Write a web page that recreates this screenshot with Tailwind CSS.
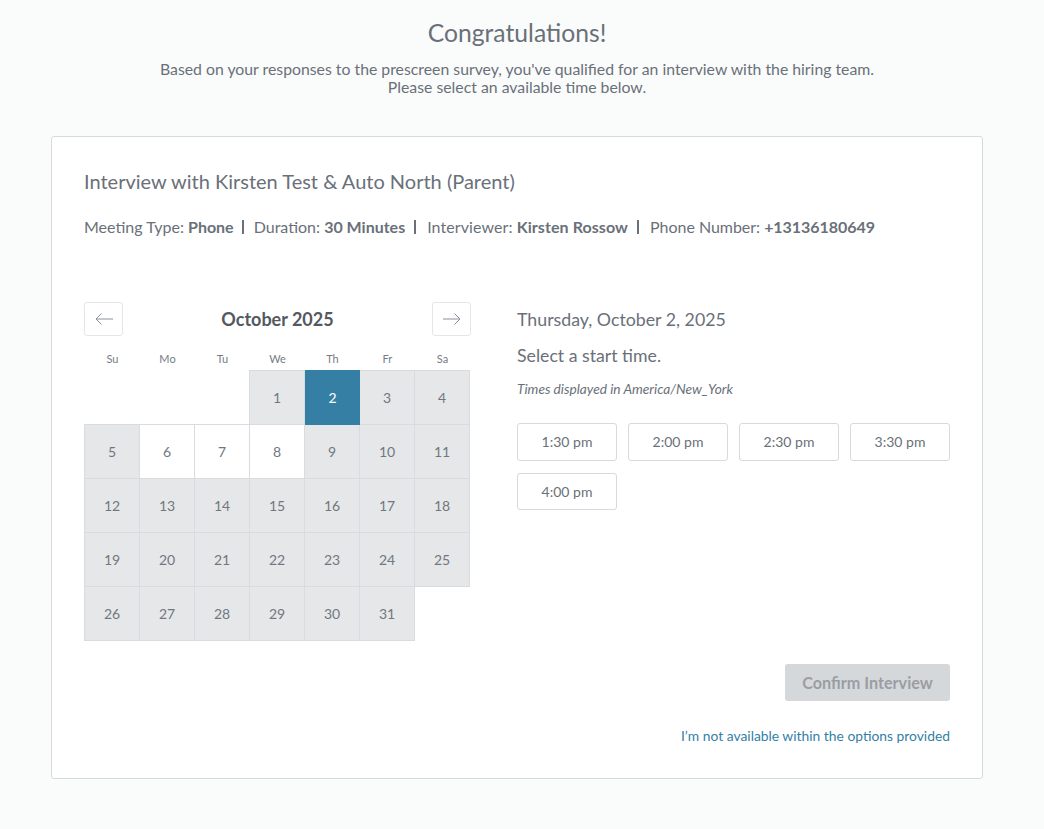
<!DOCTYPE html>
<html lang="en">
<head>
    <meta charset="UTF-8">
    <title>Schedule Interview</title>
    <script src="https://cdn.jsdelivr.net/npm/@tailwindcss/browser@4"></script>
</head>
<body class="bg-[#fafcfb] text-[#6a7079] font-['Lato',sans-serif] antialiased overflow-hidden">
    <div class="w-[1034px] h-[829px]">
        <div class="pt-[17px] text-center">
            <h1 class="text-[24.7px] leading-[32px]">Congratulations!</h1>
            <p class="mt-[11px] text-[15.8px] leading-[18px]">Based on your responses to the prescreen survey, you've qualified for an interview with the hiring team.</p>
            <p class="text-[15.8px] leading-[18px]">Please select an available time below.</p>
        </div>

        <div class="mx-[51px] mt-[40px] h-[643px] bg-white border border-[#d6d9dd] rounded-[3px] px-[32px] pt-[31px]">
            <h2 class="text-[20px] leading-[26px]">Interview with Kirsten Test &amp; Auto North (Parent)</h2>
            <div class="mt-[23px] flex items-center text-[16px] leading-[20px]">
                <span>Meeting Type: <b>Phone</b></span>
                <span class="w-[2px] h-[14px] bg-[#6a7079] ml-[8px] mr-[10px]"></span>
                <span>Duration: <b>30 Minutes</b></span>
                <span class="w-[2px] h-[14px] bg-[#6a7079] ml-[9px] mr-[11px]"></span>
                <span class="tracking-[0.08px]">Interviewer: <b>Kirsten Rossow</b></span>
                <span class="w-[2px] h-[14px] bg-[#6a7079] ml-[9px] mr-[11px]"></span>
                <span class="tracking-[-0.03px]">Phone Number: <b>+13136180649</b></span>
            </div>

            <div class="mt-[65px] flex">
                <!-- calendar -->
                <div class="w-[387px]">
                    <div class="flex items-center justify-between h-[34px]">
                        <button class="w-[39px] h-[34px] bg-white border border-[#e4e6e8] rounded-[3px] flex items-center justify-center">
                            <svg width="18" height="12" viewBox="0 0 18 12" fill="none" stroke="#8a9098" stroke-width="1"><path d="M18 6H1M6.5 .5 1 6l5.5 5.5"/></svg>
                        </button>
                        <span class="text-[18px] font-bold text-[#55595f]">October 2025</span>
                        <button class="w-[39px] h-[34px] bg-white border border-[#e4e6e8] rounded-[3px] flex items-center justify-center">
                            <svg width="18" height="12" viewBox="0 0 18 12" fill="none" stroke="#8a9098" stroke-width="1"><path d="M0 6h17M11.5 .5 17 6l-5.5 5.5"/></svg>
                        </button>
                    </div>
                    <div class="grid grid-cols-[repeat(7,55px)] mt-[15px] h-[19px] pl-[1px] text-[11px] leading-[16px] text-center text-[#767c84]">
                        <span>Su</span><span>Mo</span><span>Tu</span><span>We</span><span>Th</span><span>Fr</span><span>Sa</span>
                    </div>
                    <div class="grid grid-cols-[repeat(7,55px)] auto-rows-[54px] text-[14px] text-center text-[#71777f]">
                        <div class="col-start-4 h-[55px] w-[56px] bg-[#e6e7e9] border border-[#d9dbde] flex items-center justify-center">1</div>
                        <div class="ml-[1px] h-[55px] w-[55px] bg-[#357fa5] text-white flex items-center justify-center z-10">2</div>
                        <div class="h-[55px] w-[56px] bg-[#e6e7e9] border border-[#d9dbde] flex items-center justify-center">3</div>
                        <div class="h-[55px] w-[56px] bg-[#e6e7e9] border border-[#d9dbde] flex items-center justify-center">4</div>
                        <div class="h-[55px] w-[56px] bg-[#e6e7e9] border border-[#d9dbde] flex items-center justify-center">5</div>
                        <div class="h-[55px] w-[56px] bg-white border border-[#d9dbde] flex items-center justify-center">6</div>
                        <div class="h-[55px] w-[56px] bg-white border border-[#d9dbde] flex items-center justify-center">7</div>
                        <div class="h-[55px] w-[56px] bg-white border border-[#d9dbde] flex items-center justify-center">8</div>
                        <div class="h-[55px] w-[56px] bg-[#e6e7e9] border border-[#d9dbde] flex items-center justify-center">9</div>
                        <div class="h-[55px] w-[56px] bg-[#e6e7e9] border border-[#d9dbde] flex items-center justify-center">10</div>
                        <div class="h-[55px] w-[56px] bg-[#e6e7e9] border border-[#d9dbde] flex items-center justify-center">11</div>
                        <div class="h-[55px] w-[56px] bg-[#e6e7e9] border border-[#d9dbde] flex items-center justify-center">12</div>
                        <div class="h-[55px] w-[56px] bg-[#e6e7e9] border border-[#d9dbde] flex items-center justify-center">13</div>
                        <div class="h-[55px] w-[56px] bg-[#e6e7e9] border border-[#d9dbde] flex items-center justify-center">14</div>
                        <div class="h-[55px] w-[56px] bg-[#e6e7e9] border border-[#d9dbde] flex items-center justify-center">15</div>
                        <div class="h-[55px] w-[56px] bg-[#e6e7e9] border border-[#d9dbde] flex items-center justify-center">16</div>
                        <div class="h-[55px] w-[56px] bg-[#e6e7e9] border border-[#d9dbde] flex items-center justify-center">17</div>
                        <div class="h-[55px] w-[56px] bg-[#e6e7e9] border border-[#d9dbde] flex items-center justify-center">18</div>
                        <div class="h-[55px] w-[56px] bg-[#e6e7e9] border border-[#d9dbde] flex items-center justify-center">19</div>
                        <div class="h-[55px] w-[56px] bg-[#e6e7e9] border border-[#d9dbde] flex items-center justify-center">20</div>
                        <div class="h-[55px] w-[56px] bg-[#e6e7e9] border border-[#d9dbde] flex items-center justify-center">21</div>
                        <div class="h-[55px] w-[56px] bg-[#e6e7e9] border border-[#d9dbde] flex items-center justify-center">22</div>
                        <div class="h-[55px] w-[56px] bg-[#e6e7e9] border border-[#d9dbde] flex items-center justify-center">23</div>
                        <div class="h-[55px] w-[56px] bg-[#e6e7e9] border border-[#d9dbde] flex items-center justify-center">24</div>
                        <div class="h-[55px] w-[56px] bg-[#e6e7e9] border border-[#d9dbde] flex items-center justify-center">25</div>
                        <div class="h-[55px] w-[56px] bg-[#e6e7e9] border border-[#d9dbde] flex items-center justify-center">26</div>
                        <div class="h-[55px] w-[56px] bg-[#e6e7e9] border border-[#d9dbde] flex items-center justify-center">27</div>
                        <div class="h-[55px] w-[56px] bg-[#e6e7e9] border border-[#d9dbde] flex items-center justify-center">28</div>
                        <div class="h-[55px] w-[56px] bg-[#e6e7e9] border border-[#d9dbde] flex items-center justify-center">29</div>
                        <div class="h-[55px] w-[56px] bg-[#e6e7e9] border border-[#d9dbde] flex items-center justify-center">30</div>
                        <div class="h-[55px] w-[56px] bg-[#e6e7e9] border border-[#d9dbde] flex items-center justify-center">31</div>
                    </div>
                </div>

                <!-- times -->
                <div class="ml-[46px] w-[433px]">
                    <h3 class="mt-[5px] text-[17.75px] leading-[24px]">Thursday, October 2, 2025</h3>
                    <p class="mt-[14px] text-[17.7px] leading-[22px]">Select a start time.</p>
                    <p class="mt-[14px] text-[13.7px] leading-[16px] italic">Times displayed in America/New_York</p>
                    <div class="mt-[26px] flex flex-wrap gap-x-[11px] gap-y-[12px] text-[14px]">
                        <button class="w-[100px] h-[38px] pb-[2px] bg-white border border-[#d6d9dd] rounded-[3px]">1:30 pm</button>
                        <button class="w-[100px] h-[38px] pb-[2px] bg-white border border-[#d6d9dd] rounded-[3px]">2:00 pm</button>
                        <button class="w-[100px] h-[38px] pb-[2px] bg-white border border-[#d6d9dd] rounded-[3px]">2:30 pm</button>
                        <button class="w-[100px] h-[38px] pb-[2px] bg-white border border-[#d6d9dd] rounded-[3px]">3:30 pm</button>
                        <button class="w-[100px] h-[37px] bg-white border border-[#d6d9dd] rounded-[3px]">4:00 pm</button>
                    </div>
                    <div class="mt-[154px] flex flex-col items-end">
                        <button class="w-[165px] h-[37px] pt-[2px] bg-[#d5d8db] text-[#9a9ea3] rounded-[3px] text-[16.2px] font-bold">Confirm Interview</button>
                        <a class="mt-[26px] text-[13.85px] leading-[18px] text-[#357fa5]">I’m not available within the options provided</a>
                    </div>
                </div>
            </div>
        </div>
    </div>
</body>
</html>
